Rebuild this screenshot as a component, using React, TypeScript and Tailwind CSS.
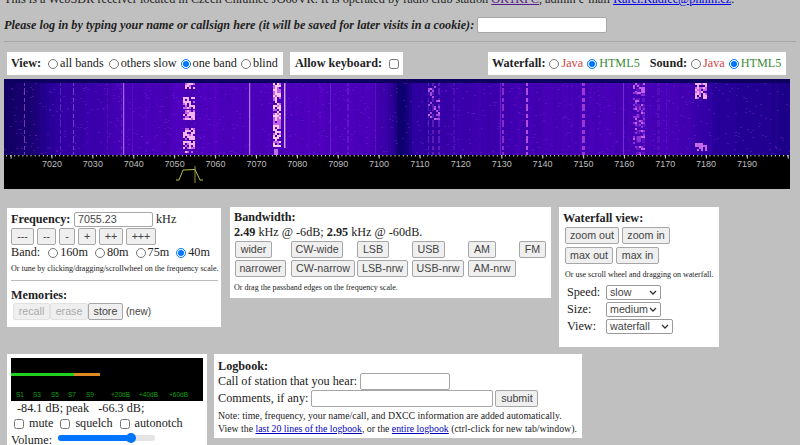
import React from "react";

const SERIF = "font-['Liberation_Serif','Times_New_Roman',serif]";
const SANS = "font-['Liberation_Sans',Arial,sans-serif]";

function Radio({ on }: { on?: boolean }) {
  return (
    <input type="radio" readOnly checked={!!on} className="appearance-auto block shrink-0 w-[10px] h-[10px] m-0 mr-[2px] accent-[#0075ff]" />
  );
}
function Check() {
  return <input type="checkbox" readOnly className="appearance-auto block shrink-0 w-[10px] h-[10px] m-0 accent-[#0075ff]" />;
}
function Btn({ children, w, off, h = 17 }: { children: React.ReactNode; w: number; off?: boolean; h?: number }) {
  return (
    <span
      style={{ width: w, height: h }}
      className={`inline-flex items-center justify-center shrink-0 rounded-[2px] border bg-[#efefef] text-[10.7px] leading-none ${SANS} ${off ? "text-[#aaaaaa] border-[#e2e2e2]" : "text-[#444] border-[#a6a6a6]"}`}
    >
      {children}
    </span>
  );
}
function Sel({ w, label }: { w: number; label: string }) {
  return (
    <span style={{ width: w }} className={`inline-flex items-center justify-between h-[15px] pl-[3px] pr-[3px] rounded-[2px] border border-[#9a9a9a] bg-white text-[10.7px] text-[#444] ${SANS}`}>
      {label}
      <svg width="8" height="5" viewBox="0 0 8 5"><path d="M1 1l3 3 3-3" fill="none" stroke="#333" strokeWidth="1.3" /></svg>
    </span>
  );
}

function rng(seed: number) {
  let s = seed;
  return () => {
    s = (s * 16807) % 2147483647;
    return s / 2147483647;
  };
}

const W = 786;
const H = 76;

function baseColour(x: number, v: number) {
  const stops: [number, number, number][] = [
    [0, 16, 100], [26, 24, 112], [50, 46, 160], [110, 66, 178], [170, 76, 186], [300, 80, 190],
    [370, 72, 182], [388, 46, 156], [393, 14, 112], [399, 14, 112], [408, 42, 156], [450, 58, 172],
    [560, 72, 184], [680, 70, 182], [710, 42, 158], [786, 28, 136],
  ];
  let a = stops[0];
  let b = stops[stops.length - 1];
  for (let i = 0; i < stops.length - 1; i++) {
    if (x >= stops[i][0] && x <= stops[i + 1][0]) {
      a = stops[i];
      b = stops[i + 1];
      break;
    }
  }
  const t = (x - a[0]) / Math.max(1, b[0] - a[0]);
  const red = a[1] + (b[1] - a[1]) * t;
  const blue = a[2] + (b[2] - a[2]) * t;
  return `rgb(${Math.round(red * v)},4,${Math.round(Math.min(255, blue * (0.5 + v * 0.5)))})`;
}

function Waterfall() {
  const r = rng(4242);
  const cols: React.ReactNode[] = [];
  for (let x = 0; x < W; x += 3) {
    const v = 0.92 + r() * 0.14;
    cols.push(<rect key={"c" + x} x={x} y={0} width={3.2} height={H} fill={baseColour(x, v)} />);
  }
  const sp: React.ReactNode[] = [];
  for (let i = 0; i < 1500; i++) {
    const x = Math.floor(r() * W);
    const y = Math.floor(r() * H);
    sp.push(<rect key={"s" + i} x={x} y={y} width={2} height={1} fill={r() > 0.5 ? "#7a20d8" : "#220098"} opacity={0.4} />);
  }
  const lines: [number, number, number, string, boolean][] = [
    [20, 1, 0.6, "#b060e0", true], [56, 1, 0.4, "#9050e0", true], [69, 1, 0.6, "#a060e8", true],
    [119, 1.2, 0.8, "#b880f0", false], [128, 1, 0.25, "#8a30d8", false], [103, 1, 0.3, "#8030d0", true], [117, 1, 0.3, "#9040d0", true],
    [245, 1.2, 0.85, "#b890f0", false], [326, 1, 0.45, "#9040e0", false], [343, 2, 0.25, "#a040e0", true],
    [371, 1, 0.3, "#9030e0", false], [424, 1, 0.4, "#a040e0", true], [428, 2, 0.3, "#c050e8", true], [434, 2, 0.3, "#c050e8", true],
    [449, 2, 0.2, "#a040e0", true], [496, 1, 0.4, "#a040e0", false], [498, 2, 0.55, "#c050e8", true],
    [522, 2, 0.8, "#d060e8", true], [578, 3, 0.7, "#c050e8", true], [619, 1, 0.5, "#a050e8", false],
    [632, 4, 0.3, "#a040e0", true], [638, 3, 0.25, "#a040e0", true], [653, 3, 0.22, "#9030e0", true], [662, 1, 0.2, "#9030e0", true],
  ];
  const ls = lines.map(([x, w, o, c, d], i) => (
    <line key={"l" + i} x1={x + w / 2} x2={x + w / 2} y1={3} y2={H} stroke={c} strokeWidth={w} opacity={o} strokeDasharray={d ? "4 2 7 3" : undefined} />
  ));
  const blocks: React.ReactNode[] = [];
  const burst = (x0: number, x1: number, ranges: [number, number][], key: string, fill = "#f3b4f0", dens = 0.72) => {
    for (let x = x0; x < x1; x += 2) {
      for (const [a, b] of ranges) {
        for (let y = a; y < b; y += 2) {
          if (r() < dens) blocks.push(<rect key={key + x + "_" + y} x={x} y={y} width={2} height={2} fill={r() > 0.35 ? fill : "#c860e8"} />);
        }
      }
    }
  };
  burst(179, 191, [[4, 10], [18, 30], [31, 41], [49, 60], [62, 74]], "a");
  burst(269, 276, [[4, 68]], "b", "#f4cce8", 0.85);
  burst(270, 274, [[68, 76]], "b2", "#c070e8", 0.6);
  blocks.push(<rect key="b3" x={280} y={3} width={1.4} height={66} fill="#d8a8f0" />);
  burst(691, 702, [[4, 19]], "c", "#f0b0f0", 0.7);
  burst(691, 702, [[64, 72]], "c2", "#c070e8", 0.6);
  burst(629, 641, [[4, 13]], "f", "#c060e8", 0.4);
  burst(629, 641, [[13, 76]], "f2", "#8c30d8", 0.25);
  burst(424, 436, [[7, 40]], "g", "#a848e0", 0.2);
  return (
    <svg width={W} height={H} viewBox={`0 0 ${W} ${H}`} className="block">
      <defs>
        <filter id="soft" x="0" y="0" width="100%" height="100%">
          <feGaussianBlur stdDeviation="0.7" />
        </filter>
      </defs>
      <g filter="url(#soft)">
        {cols}
        {sp}
        {ls}
        {blocks}
      </g>
      <rect x={0} y={0} width={W} height={4} fill="#0e0060" />
    </svg>
  );
}

function Scale() {
  const labels: React.ReactNode[] = [];
  const ticks: React.ReactNode[] = [];
  for (let x = 2; x < W; x += 4.09) {
    ticks.push(<rect key={x} x={x} y={0} width={1} height={1.5} fill="#cfcfcf" />);
  }
  for (let i = -1; i < 19; i++) {
    const x = 48 + (i * 40.9);
    ticks.push(<rect key={"m" + i} x={x - 0.5} y={0} width={1} height={3.5} fill="#cfcfcf" />);
  }
  for (let f = 7020; f <= 7190; f += 10) {
    const x = 48 + ((f - 7020) / 10) * 40.88;
    labels.push(
      <text key={f} x={x} y={11.5} fill="#bdbdbd" fontSize={9} textAnchor="middle" fontFamily="Liberation Sans, Arial, sans-serif">
        {f}
      </text>
    );
  }
  return (
    <svg width={W} height={34} viewBox={`0 0 ${W} 34`} className="block bg-black">
      {ticks}
      {labels}
      <path d="M172 25 L175 25 L179 15 L191 14.5 L196 25 L199 25" fill="none" stroke="#bcbc48" strokeWidth="1" />
      <line x1="191" x2="191" y1="11" y2="28" stroke="#bcbc48" strokeWidth="0.8" />
    </svg>
  );
}

function Meter() {
  const labels = [["S1", 5], ["S3", 22], ["S5", 40], ["S7", 57], ["S9", 75], ["+20dB", 100], ["+40dB", 128], ["+60dB", 158]] as const;
  return (
    <div className="relative w-[192px] h-[43px] bg-black">
      <div className="absolute left-0 top-[15px] h-[3px] w-[63px] bg-[#22d022]" />
      <div className="absolute left-[63px] top-[15px] h-[3px] w-[26px] bg-[#e08a24]" />
      {labels.map(([t, x]) => (
        <span key={t} style={{ left: x }} className={`absolute top-[33px] text-[6.5px] leading-[8px] text-[#14a014] ${SANS}`}>{t}</span>
      ))}
    </div>
  );
}

export default function App() {
  return (
    <div className={`w-[800px] h-[445px] overflow-hidden bg-[#c0c0c0] text-[12.2px] leading-[15px] text-[#222] ${SERIF}`}>
      <div className="h-[5px] relative">
        <p className="absolute left-[4px] -top-[8px] whitespace-nowrap text-[12.25px] leading-[15px]">
          This is a WebSDR receiver located in Czech Chlumec JO60VR. It is operated by radio club station <a className="text-[#551a8b] underline">OK1KPC</a>, admin e-mail <a className="text-[#0000ee] underline">Karel.Kadlec@phnm.cz</a>.
        </p>
      </div>
      <div className="pl-[4px] pt-[8px] flex items-center h-[32px]">
        <b className="italic whitespace-nowrap">Please log in by typing your name or callsign here (it will be saved for later visits in a cookie):</b>
        <span className="ml-[3px] w-[130px] h-[16px] bg-white border border-[#a6a6a6] rounded-[2px]" />
      </div>
      <div className="mx-[4px] mt-[4px] border-t border-[#a8a8a8] h-0" />
      <div className="mt-[10px] pl-[7px] pr-[14px] flex items-start justify-between h-[24px]">
        <div className="flex gap-[7px]">
          <div className="bg-white h-[23px] w-[276px] flex items-center pl-[4px] whitespace-nowrap">
            <b className="mr-[7px]">View:</b>
            <Radio /><span className="mr-[5px]">all bands</span>
            <Radio /><span className="mr-[4px]">others slow</span>
            <Radio on /><span className="mr-[4px]">one band</span>
            <Radio /><span>blind</span>
          </div>
          <div className="bg-white h-[23px] w-[113px] flex items-center pl-[5px] whitespace-nowrap">
            <b className="mr-[7px]">Allow keyboard:</b>
            <Check />
          </div>
        </div>
        <div className="bg-white h-[23px] w-[298px] flex items-center pl-[4px] whitespace-nowrap">
          <b className="mr-[4px]">Waterfall:</b>
          <Radio /><span className="text-[#cc4444] mr-[4px]">Java</span>
          <Radio on /><span className="text-[#3a8a3a] mr-[10px]">HTML5</span>
          <b className="mr-[4px]">Sound:</b>
          <Radio /><span className="text-[#cc4444] mr-[4px]">Java</span>
          <Radio on /><span className="text-[#3a8a3a]">HTML5</span>
        </div>
      </div>
      <div className="ml-[4px] mt-[3px] w-[786px]">
        <Waterfall />
        <Scale />
      </div>
      <div className="mt-[18px] flex items-start pl-[7px]">
        <div className="mt-[1px] w-[214px] h-[119px] bg-white pl-[4px] pr-[3px] pt-[3px]">
          <div className="flex items-center h-[16px]">
            <b className="w-[63px]">Frequency:</b>
            <span className={`w-[79px] h-[15px] border border-[#a6a6a6] rounded-[2px] pl-[3px] text-[10.7px] leading-[13px] text-[#444] ${SANS}`}>7055.23</span>
            <span className="ml-[3px]">kHz</span>
          </div>
          <div className="flex gap-[3px] mt-[1px]">
            <Btn w={23}>---</Btn><Btn w={19}>--</Btn><Btn w={16}>-</Btn><Btn w={18}>+</Btn><Btn w={24}>++</Btn><Btn w={30}>+++</Btn>
          </div>
          <div className="mt-[0px] h-[15px] flex items-center whitespace-nowrap">
            <span className="mr-[8px]">Band:</span>
            <Radio /><span className="mr-[7px]">160m</span>
            <Radio /><span className="mr-[7px]">80m</span>
            <Radio /><span className="mr-[7px]">75m</span>
            <Radio on /><span>40m</span>
          </div>
          <p className="mt-[3px] text-[8px] leading-[11px] whitespace-nowrap">Or tune by clicking/dragging/scrollwheel on the frequency scale.</p>
          <div className="mt-[6px] border-t border-[#bbb]" />
          <b className="block mt-[7px]">Memories:</b>
          <div className="flex items-center mt-[0px] ml-[2px]">
            <Btn w={37} off>recall</Btn><Btn w={38} off>erase</Btn><Btn w={35}>store</Btn>
            <span className={`ml-[3px] text-[10px] text-[#444] ${SANS}`}>(new)</span>
          </div>
        </div>
        <div className="ml-[9px] w-[321px] h-[91px] bg-white pl-[4px] pt-[3px]">
          <b className="block">Bandwidth:</b>
          <div><b>2.49</b> kHz @ -6dB; <b>2.95</b> kHz @ -60dB.</div>
          <div className="mt-[1px] ml-[1px] grid grid-cols-[56px_66px_55px_56px_51px_auto] gap-y-[2px] justify-start">
            <Btn w={37}>wider</Btn><Btn w={52}>CW-wide</Btn><Btn w={32}>LSB</Btn><Btn w={33}>USB</Btn><Btn w={28}>AM</Btn><Btn w={27}>FM</Btn>
            <Btn w={51}>narrower</Btn><Btn w={64}>CW-narrow</Btn><Btn w={51}>LSB-nrw</Btn><Btn w={52}>USB-nrw</Btn><Btn w={48}>AM-nrw</Btn>
          </div>
          <p className="mt-[5px] text-[8px] leading-[11px] whitespace-nowrap">Or drag the passband edges on the frequency scale.</p>
        </div>
        <div className="ml-[8px] w-[160px] h-[140px] bg-white pl-[4px] pt-[4px]">
          <b className="block">Waterfall view:</b>
          <div className="mt-[1px] ml-[2px] flex gap-[3px]"><Btn w={54}>zoom out</Btn><Btn w={48}>zoom in</Btn></div>
          <div className="mt-[3px] ml-[2px] flex gap-[3px]"><Btn w={48}>max out</Btn><Btn w={43}>max in</Btn></div>
          <p className="mt-[5px] ml-[2px] text-[8px] leading-[11px] whitespace-nowrap">Or use scroll wheel and dragging on waterfall.</p>
          <div className="mt-[5px] ml-[4px] grid grid-cols-[39px_auto] gap-y-[2px] items-center justify-start">
            <span>Speed:</span><Sel w={55} label="slow" />
            <span>Size:</span><Sel w={55} label="medium" />
            <span>View:</span><Sel w={67} label="waterfall" />
          </div>
        </div>
      </div>
      <div className="mt-[7px] flex items-start pl-[7px]">
        <div className="w-[200px] h-[100px] bg-white pl-[4px] pt-[4px]">
          <Meter />
          <div className="pl-[6px] mt-[0px]">-84.1 dB; peak&nbsp;&nbsp; -66.3 dB;</div>
          <div className="flex items-center pl-[3px] mt-[0px] h-[15px]">
            <Check /><span className="ml-[5px] mr-[7px]">mute</span>
            <Check /><span className="ml-[5px] mr-[7px]">squelch</span>
            <Check /><span className="ml-[5px]">autonotch</span>
          </div>
          <div className="flex items-center h-[15px] mt-[2px]">
            <span className="mr-[6px]">Volume:</span>
            <span className="relative -mt-[5px] w-[97px] h-[6px] rounded-full bg-[#e4e4e4]">
              <span className="absolute left-0 top-0 h-full w-[72px] rounded-full bg-[#0075ff]" />
              <span className="absolute left-[68px] -top-[2px] w-[10px] h-[10px] rounded-full bg-[#0075ff]" />
            </span>
          </div>
        </div>
        <div className="ml-[7px] w-[368px] h-[84px] bg-white pl-[4px] pt-[5px]">
          <b className="block">Logbook:</b>
          <div className="flex items-center h-[17px] -mt-[1px]">
            <span className="mr-[3px]">Call of station that you hear:</span>
            <span className="w-[90px] h-[17px] border border-[#a6a6a6] rounded-[2px]" />
          </div>
          <div className="flex items-center h-[17px]">
            <span className="mr-[3px]">Comments, if any:</span>
            <span className="w-[182px] h-[17px] border border-[#a6a6a6] rounded-[2px] mr-[2px]" />
            <Btn w={43}>submit</Btn>
          </div>
          <p className="mt-[2px] text-[9.8px] leading-[13px] whitespace-nowrap">Note: time, frequency, your name/call, and DXCC information are added automatically.</p>
          <p className="text-[9.8px] leading-[13px] whitespace-nowrap">View the <a className="text-[#0000c0] underline">last 20 lines of the logbook</a>, or the <a className="text-[#0000c0] underline">entire logbook</a> (ctrl-click for new tab/window).</p>
        </div>
      </div>
    </div>
  );
}
